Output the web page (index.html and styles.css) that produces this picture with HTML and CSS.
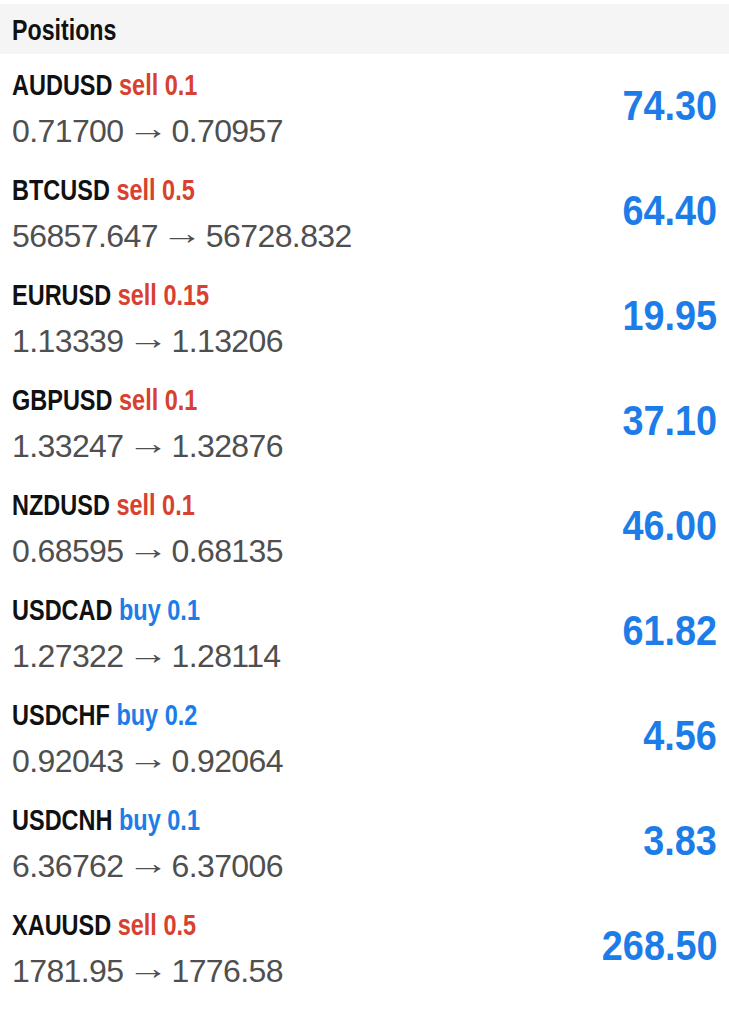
FILE: index.html
```html
<!DOCTYPE html>
<html lang="en">
<head>
  <meta charset="UTF-8">
  <meta name="viewport" content="width=device-width, initial-scale=1.0">
  <title>Positions</title>
  <link rel="stylesheet" href="styles.css">
</head>
<body>
<div class="positions">
  <div class="header"><span class="narrow">Positions</span></div>

  <div class="row">
    <div class="info">
      <div class="symbol">AUDUSD <span class="sell">sell 0.1</span></div>
      <div class="prices">0.71700<span class="arrow"> &rarr; </span>0.70957</div>
    </div>
    <div class="profit">74.30</div>
  </div>

  <div class="row">
    <div class="info">
      <div class="symbol">BTCUSD <span class="sell">sell 0.5</span></div>
      <div class="prices">56857.647<span class="arrow"> &rarr; </span>56728.832</div>
    </div>
    <div class="profit">64.40</div>
  </div>

  <div class="row">
    <div class="info">
      <div class="symbol">EURUSD <span class="sell">sell 0.15</span></div>
      <div class="prices">1.13339<span class="arrow"> &rarr; </span>1.13206</div>
    </div>
    <div class="profit">19.95</div>
  </div>

  <div class="row">
    <div class="info">
      <div class="symbol">GBPUSD <span class="sell">sell 0.1</span></div>
      <div class="prices">1.33247<span class="arrow"> &rarr; </span>1.32876</div>
    </div>
    <div class="profit">37.10</div>
  </div>

  <div class="row">
    <div class="info">
      <div class="symbol">NZDUSD <span class="sell">sell 0.1</span></div>
      <div class="prices">0.68595<span class="arrow"> &rarr; </span>0.68135</div>
    </div>
    <div class="profit">46.00</div>
  </div>

  <div class="row">
    <div class="info">
      <div class="symbol">USDCAD <span class="buy">buy 0.1</span></div>
      <div class="prices">1.27322<span class="arrow"> &rarr; </span>1.28114</div>
    </div>
    <div class="profit">61.82</div>
  </div>

  <div class="row">
    <div class="info">
      <div class="symbol">USDCHF <span class="buy">buy 0.2</span></div>
      <div class="prices">0.92043<span class="arrow"> &rarr; </span>0.92064</div>
    </div>
    <div class="profit">4.56</div>
  </div>

  <div class="row">
    <div class="info">
      <div class="symbol">USDCNH <span class="buy">buy 0.1</span></div>
      <div class="prices">6.36762<span class="arrow"> &rarr; </span>6.37006</div>
    </div>
    <div class="profit">3.83</div>
  </div>

  <div class="row">
    <div class="info">
      <div class="symbol">XAUUSD <span class="sell">sell 0.5</span></div>
      <div class="prices">1781.95<span class="arrow"> &rarr; </span>1776.58</div>
    </div>
    <div class="profit">268.50</div>
  </div>
</div>
</body>
</html>
```

FILE: styles.css
```css
body {
  margin: 0;
  background: #fff;
  font-family: "Liberation Sans", Arial, sans-serif;
}
.positions {
  padding-top: 4px;
}
.header {
  height: 50px;
  background: #f5f5f5;
  padding: 0 12px;
  font-weight: bold;
  font-size: 29px;
  line-height: 52px;
  color: #111;
}
.narrow {
  display: inline-block;
  transform: scaleX(0.8);
  transform-origin: left;
}
.row {
  height: 105px;
  box-sizing: border-box;
  padding: 13px 12px 0 12px;
  display: flex;
  justify-content: space-between;
}
.symbol {
  font-weight: bold;
  font-size: 29px;
  line-height: 36px;
  color: #111;
  white-space: nowrap;
  transform: scaleX(0.81);
  transform-origin: left;
}
.sell {
  color: #d8412f;
}
.buy {
  color: #1c7de8;
}
.prices {
  font-size: 32px;
  line-height: 50px;
  letter-spacing: -0.6px;
  color: #4f4f4f;
  white-space: nowrap;
}
.arrow {
  display: inline-block;
  white-space: pre;
  word-spacing: -5.5px;
  margin: 0 5.5px;
  transform: scaleX(1.3);
  vertical-align: 3px;
}
.profit {
  font-weight: bold;
  font-size: 42px;
  line-height: 44px;
  color: #1c7de8;
  margin-top: 17px;
  transform: scaleX(0.9);
  transform-origin: right;
}
```
